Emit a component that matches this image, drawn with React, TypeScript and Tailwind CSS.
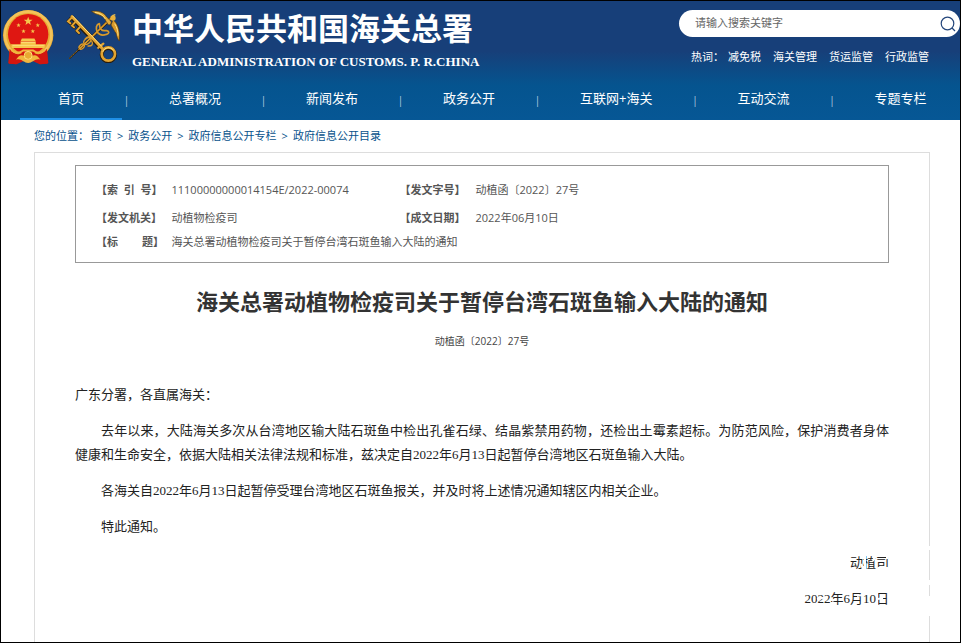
import { Fragment } from 'react';

const navItems = ['首页', '总署概况', '新闻发布', '政务公开', '互联网+海关', '互动交流', '专题专栏'];
const hotWords = ['减免税', '海关管理', '货运监管', '行政监管'];
const crumbs = ['首页', '政务公开', '政府信息公开专栏', '政府信息公开目录'];

const STAR = 'M0 -10 L2.4 -3.2 L9.5 -3.1 L3.9 1.2 L5.9 8.1 L0 4 L-5.9 8.1 L-3.9 1.2 L-9.5 -3.1 L-2.4 -3.2 Z';

const Emblem = () => (
    <svg viewBox="6 28 160 170" className="h-[57px] w-[53px] shrink-0" aria-hidden="true">
        <path d="M30 146 L26 192 L50 194 L85 178 L120 194 L144 192 L142 146 Z" fill="#d3160f" />
        <circle cx="85" cy="106" r="76" fill="#e8aa32" />
        <circle cx="85" cy="105" r="70" fill="none" stroke="#f3c35a" strokeWidth="8" />
        <circle cx="85" cy="103" r="61" fill="#df1712" />
        <g fill="#f6c64c">
            <path d={STAR} transform="translate(85 64) scale(1.4)" />
            <path d={STAR} transform="translate(56 76) scale(.7)" />
            <path d={STAR} transform="translate(71 94) scale(.7)" />
            <path d={STAR} transform="translate(99 94) scale(.7)" />
            <path d={STAR} transform="translate(114 76) scale(.7)" />
            <path d="M66 116 L104 116 L108 124 L62 124 Z" />
            <path d="M62 125 H108 V133 H137 L134 145 H36 L33 133 H62 Z" />
        </g>
        <path d="M38 137 H132 M64 128 H106" stroke="#ffe58c" strokeWidth="2" />
        <path d="M29 147 C42 166 60 168 72 155 L98 155 C110 168 128 166 141 147 L146 190 L122 194 L104 174 L85 188 L66 174 L48 194 L25 190 Z" fill="#d3160f" />
        <path d="M34 151 C47 162 60 160 70 152 H100 C110 160 123 162 136 151" fill="none" stroke="#f1b63e" strokeWidth="6" />
        <path d="M48 180 C62 160 70 164 85 180 C100 164 108 160 122 180 C106 174 98 190 85 190 C72 190 64 174 48 180 Z" fill="#f1b63e" />
        <circle cx="85" cy="167" r="12" fill="#e8aa32" stroke="#ffe07a" strokeWidth="3" />
    </svg>
);

const KeyLogo = () => (
    <svg viewBox="198 36 168 162" className="ml-[11px] h-[54px] w-[56px] shrink-0" fill="none" aria-hidden="true">
        <g stroke="#2a1d0c" strokeLinecap="round" strokeLinejoin="round">
            <path d="M209 184 L236 158" strokeWidth="4" />
            <path d="M236 158 L334 64" strokeWidth="8" />
            <path d="M214 63 L204 73 L211 79 M225 76 L216 86 L222 91 M239 91 L230 101 L237 108" strokeWidth="9" />
            <path d="M216 62 L308 158" strokeWidth="14" />
            <circle cx="325" cy="173" r="20" strokeWidth="12" />
        </g>
        <g stroke="#d99a2b" strokeLinecap="round" strokeLinejoin="round">
            <path d="M209 183 L236 157" strokeWidth="2" strokeDasharray="3 4" />
            <path d="M240 154 L332 65" strokeWidth="5" />
            <ellipse cx="245" cy="149" rx="9" ry="6" strokeWidth="4" transform="rotate(-40 245 149)" />
            <ellipse cx="262" cy="132" rx="12" ry="8" strokeWidth="4" transform="rotate(-40 262 132)" />
            <path d="M264 147 C276 148 281 141 275 132 M256 125 C264 116 276 118 283 127" strokeWidth="4" />
            <path d="M292 106 C286 94 289 82 298 80 C300 86 297 92 303 97 C309 103 314 100 320 101 C329 103 328 110 320 112 C309 116 298 114 292 106" strokeWidth="5" />
        </g>
        <path d="M274 43 C294 40 311 45 320 60 L333 73 C335 79 332 84 326 84 C320 78 317 70 312 62 C304 55 294 53 286 50 C282 48 278 46 274 43 Z" fill="#e5ad3b" stroke="#4b3512" strokeWidth="2" />
        <path d="M339 68 C351 78 361 94 358 132 C351 125 350 116 348 109 C343 102 339 94 333 84 Z" fill="#d9992a" stroke="#4b3512" strokeWidth="2" />
        <path d="M285 46 C299 48 309 54 316 66 M344 80 C351 91 354 102 354 116" stroke="#ffe285" strokeWidth="3" />
        <circle cx="339" cy="63" r="8" fill="#e9b13c" />
        <path d="M337 56 L346 53" stroke="#f0bf4e" strokeWidth="4" />
        <g stroke="#e2a432" strokeLinecap="round">
            <path d="M216 59 L309 157" strokeWidth="9" />
            <path d="M214 63 L204 73 L211 79 M225 76 L216 86 L222 91 M239 91 L230 101 L237 108" strokeWidth="6" />
            <circle cx="325" cy="171" r="20" strokeWidth="8" />
            <path d="M295 152 L310 140" strokeWidth="7" />
        </g>
        <path d="M218 57 L305 148 M309 163 C313 151 331 147 341 160" stroke="#ffe387" strokeWidth="3" strokeLinecap="round" />
    </svg>
);

const Header = () => (
    <header className="bg-[linear-gradient(#173f79_0px,#173f79_50px,#05548f_84px,#065795_119px)] text-white">
        <div className="flex h-[78px] items-start justify-between">
            <div className="flex pl-px pt-2">
                <Emblem />
                <KeyLogo />
                <div className="ml-[10px] whitespace-nowrap">
                    <h1 className="text-[31px] font-bold leading-[38px]">中华人民共和国海关总署</h1>
                    <p className="font-['Liberation_Serif',serif] text-[13px] font-bold leading-[30px]">GENERAL ADMINISTRATION OF CUSTOMS. P. R.CHINA</p>
                </div>
            </div>
            <div className="w-[281px] shrink-0 pt-[9px]">
                <form className="flex h-[27px] items-center rounded-full bg-white pl-4 pr-1" onSubmit={(e) => e.preventDefault()}>
                    <input
                        type="text"
                        aria-label="搜索"
                        placeholder="请输入搜索关键字"
                        className="min-w-0 flex-1 bg-transparent text-[11px] text-gray-700 outline-none placeholder:text-[#666]"
                    />
                    <button type="submit" aria-label="搜索" className="text-[#24467b]">
                        <svg viewBox="0 0 16 16" className="size-4" fill="none" stroke="currentColor" strokeWidth="1.2">
                            <circle cx="7.5" cy="7.5" r="6.3" />
                            <path d="M12 12 L15 15" />
                        </svg>
                    </button>
                </form>
                <div className="flex gap-3 whitespace-nowrap pl-3 pt-3 text-[11px] leading-4">
                    <span className="-mr-2">热词：</span>
                    {hotWords.map((word) => (
                        <a key={word} href="#">{word}</a>
                    ))}
                </div>
            </div>
        </div>
        <nav className="flex h-[41px] overflow-hidden whitespace-nowrap pl-[19px] text-[13px] leading-[39px]">
            {navItems.map((item, i) => (
                <Fragment key={item}>
                    {i > 0 && <span className="w-[9px] shrink-0 text-center text-[10px] leading-[42px] text-[#b8cde0]">|</span>}
                    <a href="#" className={`shrink-0 border-b-2 px-[38px] ${i === 0 ? 'border-[#1f8fe6]' : 'border-transparent'}`}>
                        {item}
                    </a>
                </Fragment>
            ))}
        </nav>
    </header>
);

const Meta = () => (
    <table className="w-full border border-[#999] text-left text-[11px] leading-4 text-[#555]">
        <tbody>
            <tr>
                <th className="w-24 pb-1.5 pl-5 pt-4">【索&nbsp; 引&nbsp; 号】</th>
                <td className="w-[228px] pb-1.5 pt-4">11100000000014154E/2022-00074</td>
                <th className="w-[76px] pb-1.5 pt-4">【发文字号】</th>
                <td className="pb-1.5 pt-4">动植函〔2022〕27号</td>
            </tr>
            <tr>
                <th className="py-1.5 pl-5">【发文机关】</th>
                <td>动植物检疫司</td>
                <th>【成文日期】</th>
                <td>2022年06月10日</td>
            </tr>
            <tr>
                <th className="pb-3 pl-5 pt-0.5">【标<span className="inline-block w-6" />题】</th>
                <td colSpan={3} className="pb-3 pt-0.5">海关总署动植物检疫司关于暂停台湾石斑鱼输入大陆的通知</td>
            </tr>
        </tbody>
    </table>
);

const Notice = () => (
    <article>
        <h2 className="mt-[22px] text-center text-[22px] font-bold leading-8 text-[#333]">海关总署动植物检疫司关于暂停台湾石斑鱼输入大陆的通知</h2>
        <p className="mt-4 text-center text-[10px] leading-4 text-[#444]">动植函〔2022〕27号</p>
        <div className="mt-[34px] space-y-3 text-justify font-['Liberation_Serif','Noto_Sans_CJK_SC',sans-serif] text-[13px] leading-6 text-[#222]">
            <p>广东分署，各直属海关：</p>
            <p className="indent-[26px]">
                去年以来，大陆海关多次从台湾地区输大陆石斑鱼中检出孔雀石绿、结晶紫禁用药物，还检出土霉素超标。为防范风险，保护消费者身体健康和生命安全，依据大陆相关法律法规和标准，兹决定自2022年6月13日起暂停台湾地区石斑鱼输入大陆。
            </p>
            <p className="indent-[26px]">各海关自2022年6月13日起暂停受理台湾地区石斑鱼报关，并及时将上述情况通知辖区内相关企业。</p>
            <p className="indent-[26px]">特此通知。</p>
            <div className="relative space-y-3 text-right">
                <p>动植司</p>
                <p>2022年6月10日</p>
                {/* worn patches over the signature and the card edge */}
                <svg viewBox="0 0 142 90" className="absolute -right-[42px] -top-3 h-[90px] w-[142px]" stroke="#fff" strokeWidth="2" aria-hidden="true">
                    <path d="M72 25 L75 32 M76 15 L76 32 M86 17 L84 22 M89 29 H99 M98 16 V20 M28 60 L38 58 M43 62 L47 60 M68 57 L73 56 M88 54 V68 M89 60 L94 59" />
                    <path d="M140 7 V11 M140 41 V46 M140 57 V77" strokeWidth="4" />
                </svg>
            </div>
        </div>
    </article>
);

export default function App() {
    return (
        <div lang="zh-CN" className="flex min-h-screen flex-col border border-black bg-white font-['Open_Sans','Noto_Sans_CJK_SC',sans-serif]">
            <Header />
            <div className="flex flex-1 flex-col pl-[33px] pr-[30px]">
                <nav className="flex gap-[5px] py-2 text-[11px] leading-4 text-[#07528c]">
                    <span className="-mr-1">您的位置：</span>
                    {crumbs.map((name, i) => (
                        <Fragment key={name}>
                            {i > 0 && <span>&gt;</span>}
                            <a href="#">{name}</a>
                        </Fragment>
                    ))}
                </nav>
                <main className="flex-1 border-x border-t border-[#ddd] px-10 pt-3">
                    <Meta />
                    <Notice />
                </main>
            </div>
        </div>
    );
}
